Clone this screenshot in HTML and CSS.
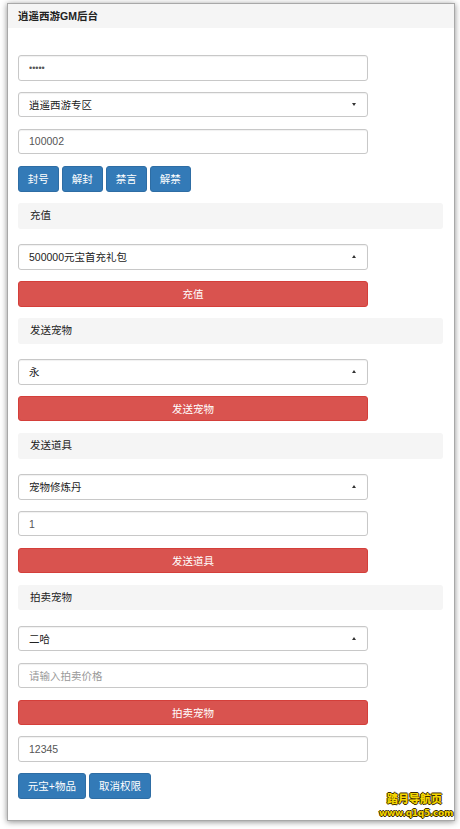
FILE: index.html
```html
<!DOCTYPE html>
<html lang="zh-CN">
<head>
<meta charset="utf-8">
<title>逍遥西游GM后台</title>
<link rel="stylesheet" href="styles.css">
</head>
<body>
<div class="card">
  <div class="card-head">逍遥西游GM后台</div>
  <div class="card-body">
    <input class="ctl" type="password" value="admin">
    <div class="ctl sel"><span>逍遥西游专区</span><i class="caret down"></i></div>
    <input class="ctl" type="text" value="100002">
    <div class="btns">
      <button class="btn blue">封号</button>
      <button class="btn blue">解封</button>
      <button class="btn blue">禁言</button>
      <button class="btn blue">解禁</button>
    </div>

    <div class="sec">充值</div>
    <div class="ctl sel"><span>500000元宝首充礼包</span><i class="caret up"></i></div>
    <button class="btn red wide">充值</button>

    <div class="sec">发送宠物</div>
    <div class="ctl sel"><span>永</span><i class="caret up"></i></div>
    <button class="btn red wide">发送宠物</button>

    <div class="sec">发送道具</div>
    <div class="ctl sel"><span>宠物修炼丹</span><i class="caret up"></i></div>
    <input class="ctl" type="text" value="1">
    <button class="btn red wide">发送道具</button>

    <div class="sec">拍卖宠物</div>
    <div class="ctl sel"><span>二哈</span><i class="caret up"></i></div>
    <input class="ctl" type="text" placeholder="请输入拍卖价格">
    <button class="btn red wide">拍卖宠物</button>
    <input class="ctl" type="text" value="12345">
    <div class="btns last">
      <button class="btn blue">元宝+物品</button>
      <button class="btn blue">取消权限</button>
    </div>
  </div>
</div>
<div class="mark">
  <div class="mark-cn">踏月导航页</div>
  <div class="mark-en">www.q1q5.com</div>
</div>
</body>
</html>
```

FILE: styles.css
```css
* { box-sizing: border-box; }
html, body { margin: 0; padding: 0; background: #fff; }
body {
  font-family: "Liberation Sans", "Noto Sans CJK SC", sans-serif;
  font-size: 10.5px;
  color: #333;
  width: 460px;
  height: 829px;
  position: relative;
  overflow: hidden;
}
.card {
  margin: 3px 5px 0 7px;
  width: 448px;
  border: 1px solid #a8a8a8;
  background: #fff;
  box-shadow: 0 1px 6px rgba(0,0,0,0.45);
}
.card-head {
  height: 24px;
  background: #f5f5f5;
  padding-left: 10px;
  line-height: 24px;
  font-size: 10.5px;
  font-weight: 700;
  color: #222;
}
.card-body {
  padding: 27px 11px 21px 10px;
  display: flex;
  flex-direction: column;
  align-items: flex-start;
}
.ctl {
  width: 350px;
  height: 25.5px;
  margin: 0 0 11.35px 0;
  border: 1px solid #c8c8c8;
  border-radius: 3px;
  padding: 0 10px;
  font-family: "Liberation Sans", "Noto Sans CJK SC", sans-serif;
  font-size: 10.5px;
  color: #555;
  background: #fff;
  outline: none;
  box-shadow: inset 0 1px 1px rgba(0,0,0,0.06);
}
.ctl::placeholder { color: #999; }
input[type="password"].ctl { letter-spacing: 0; font-size: 9px; }
.sel {
  display: flex;
  align-items: center;
  justify-content: space-between;
  color: #222;
  padding-right: 11px;
}
.caret {
  width: 0;
  height: 0;
  border-left: 2.5px solid transparent;
  border-right: 2.5px solid transparent;
}
.caret.down { border-top: 3px solid #333; }
.caret.up { border-bottom: 3px solid #333; }
.btns {
  display: flex;
  gap: 3.4px;
  margin-bottom: 11.35px;
}
.btns.last { margin-bottom: 0; }
.btn {
  height: 26px;
  padding: 0 8.8px;
  border-radius: 3px;
  font-family: "Liberation Sans", "Noto Sans CJK SC", sans-serif;
  font-size: 10.5px;
  color: #fff;
  cursor: pointer;
  line-height: 24px;
}
.blue { background: #337ab7; border: 1px solid #2e6da4; }
.red { background: #d9534f; border: 1px solid #d43f3a; }
.wide { width: 350px; height: 25.5px; margin-bottom: 11.35px; }
.sec {
  width: 425px;
  height: 25.7px;
  margin-bottom: 15.6px;
  background: #f5f5f5;
  border-radius: 3px;
  padding-left: 12px;
  line-height: 25.7px;
  color: #222;
}
.mark {
  position: absolute;
  right: 7px;
  bottom: 11px;
  text-align: right;
  font-family: "Noto Sans CJK SC", sans-serif;
  font-weight: 900;
  color: #f5d600;
  text-shadow: -1px 0 #3a2a00, 1px 0 #3a2a00, 0 -1px #3a2a00, 0 1px #3a2a00;
  line-height: 1;
}
.mark-cn { font-size: 11px; letter-spacing: 0; margin-right: 11px; margin-bottom: 5px; }
.mark-en { font-family: "DejaVu Sans", sans-serif; font-size: 9px; font-weight: 700; letter-spacing: -0.3px; }
```
